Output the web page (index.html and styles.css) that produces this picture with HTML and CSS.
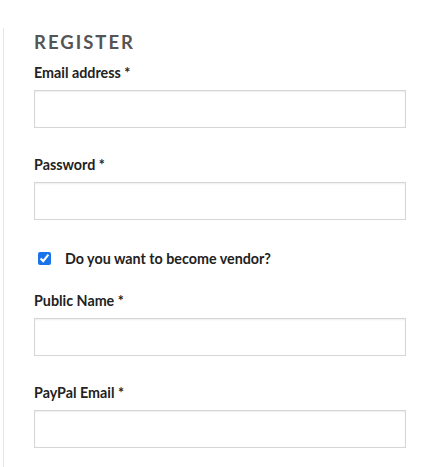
FILE: index.html
```html
<!DOCTYPE html>
<html>
<head>
<meta charset="utf-8">
<link rel="stylesheet" href="styles.css">
</head>
<body>
<div class="panel">
  <h2 class="title">REGISTER</h2>
  <form class="form">
    <div class="field">
      <label class="label">Email address&nbsp;*</label>
      <input class="input" type="email">
    </div>
    <div class="field">
      <label class="label">Password&nbsp;*</label>
      <input class="input" type="password">
    </div>
    <div class="check-row">
      <input class="check" type="checkbox" checked>
      <span class="check-text">Do you want to become vendor?</span>
    </div>
    <div class="field">
      <label class="label">Public Name&nbsp;*</label>
      <input class="input" type="text">
    </div>
    <div class="field">
      <label class="label">PayPal Email&nbsp;*</label>
      <input class="input" type="email">
    </div>
  </form>
</div>
</body>
</html>
```

FILE: styles.css
```css
html, body {
  margin: 0;
  padding: 0;
  background: #fff;
  font-family: Lato, "Open Sans", sans-serif;
}
.panel {
  margin: 28px 0 0 3px;
  border-left: 1px solid #e6e6e6;
  padding: 3px 0 0 30px;
  min-height: 440px;
  box-sizing: border-box;
}
.title {
  margin: 0 0 10px;
  font-size: 18.5px;
  line-height: 22px;
  font-weight: 700;
  letter-spacing: 2px;
  color: #555;
}
.form {
  width: 372px;
}
.field {
  margin-bottom: 27px;
}
.label {
  display: block;
  font-size: 14.3px;
  line-height: 20px;
  font-weight: 700;
  color: #222;
  margin-bottom: 7px;
}
.input {
  display: block;
  width: 100%;
  height: 38px;
  box-sizing: border-box;
  border: 1px solid #d6d6d6;
  box-shadow: inset 0 1px 2px rgba(0,0,0,0.07);
  background: #fff;
  margin: 0;
  padding: 0 8px;
  outline: none;
}
.check-row {
  display: flex;
  align-items: center;
  height: 20px;
  margin: 28px 0 23px;
}
.check {
  margin: 3px 3px 3px 4px;
  width: 13px;
  height: 13px;
  accent-color: #1a73e8;
}
.check-text {
  margin-left: 11px;
  font-size: 14.3px;
  font-weight: 700;
  color: #222;
}
```
